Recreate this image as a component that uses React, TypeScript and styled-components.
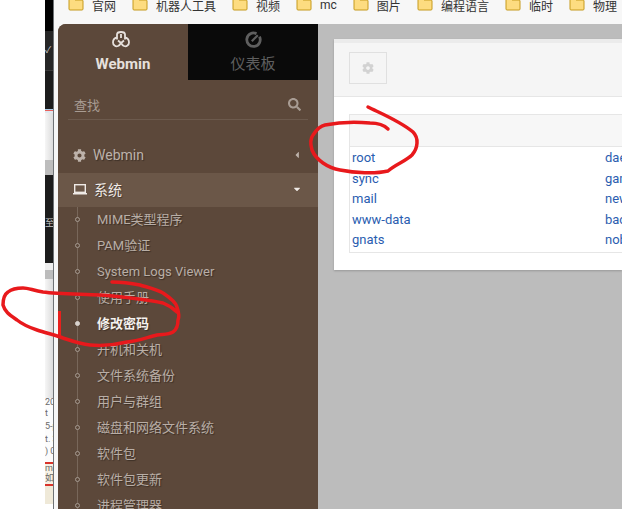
import React from "react";
import styled, { createGlobalStyle } from "styled-components";
import { FaCog, FaSearch, FaCaretLeft, FaCaretDown } from "react-icons/fa";

const bookmarks = ["官网", "机器人工具", "视频", "mc", "图片", "编程语言", "临时", "物理"];
const subItems = [
  "MIME类型程序",
  "PAM验证",
  "System Logs Viewer",
  "使用手册",
  "修改密码",
  "开机和关机",
  "文件系统备份",
  "用户与群组",
  "磁盘和网络文件系统",
  "软件包",
  "软件包更新",
  "进程管理器",
];
const users = [
  ["root", "daemon"],
  ["sync", "games"],
  ["mail", "news"],
  ["www-data", "backup"],
  ["gnats", "nobody"],
];
const paleFade = "linear-gradient(90deg, #f6f6f6, #dcdcdc)";
const slices: [number, string, string?][] = [
  [31, "#000"],
  [39, "#262626", "✓"],
  [1, "#3a3a3a"],
  [38, "#1c1c1c"],
  [1, "#a9cbe6"],
  [1, "#e8605c"],
  [2, "#dfe7ee"],
  [47, paleFade],
  [15, "#bdbdbd"],
  [40, "#1c1c1c"],
  [17, "#1c1c1c", "至"],
  [31, "#1c1c1c"],
  [7, "#efefef"],
  [9, "#bcbcbc"],
  [119, paleFade],
  [9, "#fcfcfc", "20"],
  [13, "#fcfcfc", "t"],
  [13, "#fcfcfc", "5-p"],
  [12, "#fcfcfc", "t. 3"],
  [12, "#fcfcfc", ") 0"],
  [5, "#fcfcfc"],
  [2, "#d9342b"],
  [9, "#f7f1e3", "me"],
  [11, "#f7f1e3", "如可"],
  [2, "#d9342b"],
  [18, "#efe9d8"],
];

const GlobalStyle = createGlobalStyle`
  html, body {
    margin: 0;
    padding: 0;
    background: #fff;
  }
`;

const Page = styled.div`
  position: relative;
  display: flex;
  width: 622px;
  height: 509px;
  overflow: hidden;
  font-family: Roboto, "Noto Sans CJK SC", sans-serif;
`;
const BlankSide = styled.div`
  flex: 0 0 45px;
`;
const BehindStrip = styled.div`
  flex: 0 0 8px;
  display: flex;
  flex-direction: column;
  overflow: hidden;
  border-right: 1px solid #6f7376;
`;
const Slice = styled.div<{ $h: number; $bg: string; $dark: boolean }>`
  flex: 0 0 ${(p) => p.$h}px;
  background: ${(p) => p.$bg};
  color: ${(p) => (p.$dark ? "#c9c9c9" : "#6a6a6a")};
  font-size: 9px;
  line-height: ${(p) => p.$h}px;
  white-space: nowrap;
  overflow: hidden;
`;
const BrowserWindow = styled.div`
  flex: 1;
  min-width: 0;
  display: flex;
  flex-direction: column;
`;
const BookmarkBar = styled.div`
  flex: 0 0 24px;
  display: flex;
  gap: 16px;
  padding-left: 14px;
  background: #f7f7f7;
  overflow: hidden;
`;
const Bookmark = styled.div`
  display: flex;
  flex: none;
  align-items: center;
  gap: 8px;
  height: 12px;
  margin-top: -1px;
  font-size: 12px;
  color: #333;
`;
const Desk = styled.div`
  flex: 1;
  min-height: 0;
  display: flex;
  background: #f7f7f7;
`;
const Sidebar = styled.aside`
  flex: 0 0 260px;
  margin-left: 4px;
  background: #5c483a;
  border-top-left-radius: 8px;
  overflow: hidden;
`;
const Tabs = styled.div`
  display: flex;
  height: 56px;
`;
const Tab = styled.div<{ $active?: boolean }>`
  flex: 1;
  display: flex;
  flex-direction: column;
  align-items: center;
  padding-top: 7px;
  gap: 8px;
  box-sizing: border-box;
  background: ${(p) => (p.$active ? "#5c483a" : "#0a0a0a")};
  color: ${(p) => (p.$active ? "#e6e0dc" : "#5f5f5f")};
  font-size: 15px;
  line-height: 16px;
  font-weight: ${(p) => (p.$active ? 700 : 400)};
`;
const SearchRow = styled.div`
  display: flex;
  justify-content: space-between;
  align-items: center;
  height: 40px;
  margin: 0 10px;
  padding: 10px 7px 0 6px;
  box-sizing: border-box;
  border-bottom: 1px solid #6c5a4d;
  color: #a89c93;
  font-size: 13px;
`;
const MenuGap = styled.div`
  height: 19px;
`;
const MenuRow = styled.div<{ $open?: boolean }>`
  display: flex;
  align-items: center;
  gap: 7px;
  height: 34px;
  box-sizing: border-box;
  padding: 0 16px 2px 15px;
  background: ${(p) => (p.$open ? "#6b5748" : "transparent")};
  color: ${(p) => (p.$open ? "#efeae6" : "#bdb2aa")};
  font-size: 14px;
  text-shadow: 1px 1px 1px rgba(0, 0, 0, 0.35);
`;
const MenuLabel = styled.span`
  flex: 1;
`;
const SubList = styled.div`
  position: relative;
  &::before {
    content: "";
    position: absolute;
    left: 19px;
    top: 0;
    bottom: 0;
    width: 1px;
    background: #78675a;
  }
`;
const SubItem = styled.div<{ $active?: boolean }>`
  position: relative;
  height: 26px;
  padding-left: ${(p) => (p.$active ? 36 : 39)}px;
  border-left: ${(p) => (p.$active ? "3px solid #e8201c" : "0")};
  color: ${(p) => (p.$active ? "#f4f1ee" : "#b9aea6")};
  font-size: 13px;
  font-weight: ${(p) => (p.$active ? 700 : 400)};
  line-height: 26px;
  white-space: nowrap;
  text-shadow: 1px 1px 1px rgba(0, 0, 0, 0.35);
  &::before {
    content: "";
    position: absolute;
    left: ${(p) => (p.$active ? 14 : 17)}px;
    top: 10px;
    width: 5px;
    height: 5px;
    box-sizing: border-box;
    border-radius: 50%;
    border: 1px solid ${(p) => (p.$active ? "#d8d2cd" : "#a59a91")};
    background: ${(p) => (p.$active ? "#d8d2cd" : "#5c483a")};
  }
`;
const Content = styled.main`
  flex: 1;
  min-width: 0;
  padding: 15px 0 0 16px;
  background: #bcbcbc;
`;
const Panel = styled.section`
  height: 231px;
  box-sizing: border-box;
  background: #fff;
  border-top: 4px solid #ebebeb;
  box-shadow: 0 1px 2px rgba(0, 0, 0, 0.2);
`;
const PanelHead = styled.div`
  height: 54px;
  box-sizing: border-box;
  padding: 9px 15px;
  background: #f5f5f5;
  border-bottom: 1px solid #e6e6e6;
`;
const GearButton = styled.div`
  display: flex;
  align-items: center;
  justify-content: center;
  width: 38px;
  height: 32px;
  box-sizing: border-box;
  border: 1px solid #e0e0e0;
  color: #d2d2d2;
`;
const PanelBody = styled.div`
  padding: 17px 0 0 15px;
`;
const UserTable = styled.div`
  border: 1px solid #e6e6e6;
  border-right: 0;
  height: 139px;
  box-sizing: border-box;
`;
const TableHead = styled.div`
  height: 31px;
  margin-bottom: 1px;
  background: #f7f7f7;
  border-bottom: 1px solid #e6e6e6;
`;
const UserRow = styled.div`
  display: grid;
  grid-template-columns: 253px 1fr;
  height: 20.6px;
  padding-left: 2px;
  color: #2a5db0;
  font-size: 13px;
  line-height: 20.6px;
  white-space: nowrap;
  overflow: hidden;
`;
const LogoWrap = styled.svg`
  margin-left: -5px;
`;
const Scribbles = styled.svg`
  position: absolute;
  left: 0;
  top: 0;
  pointer-events: none;
`;

const Folder = () => (
  <svg width="16" height="14" viewBox="0 0 16 14" style={{ marginTop: -2 }}>
    <path
      d="M1 -2V12a1 1 0 0 0 1 1H14a1 1 0 0 0 1-1V4a1 1 0 0 0-1-1H7L5-2Z"
      fill="#fddc80"
      stroke="#c69a1c"
    />
  </svg>
);

const WebminLogo = () => (
  <LogoWrap width="18" height="17" viewBox="0 0 18 17" fill="none" stroke="currentColor" strokeWidth="1.800">
    <path d="M5 8.500V3.500C5 1.800 6.500 1 9 1s4 .8 4 2.500V8.500" />
    <path d="M9 3v4" />
    <path d="M5 6.500C2.500 7 1 9 1 11.500c0 2.500 2.500 4.500 5 3.500 1.500-.6 2.300-1.800 3-3" />
    <path d="M13 6.500c2.500.5 4 2.500 4 5 0 2.500-2.500 4.500-5 3.500-1.500-.6-2.300-1.800-3-3" />
    <path d="M6 9.500 9 12l3-2.500" />
  </LogoWrap>
);

const Gauge = () => (
  <svg width="17" height="17" viewBox="0 0 17 17" fill="none" stroke="currentColor">
    <path d="M11.500 2.700A6.700 6.700 0 1 0 14.500 5.700" strokeWidth="2.800" />
    <path d="M6.800 10.200 12.800 4.200" strokeWidth="2.200" />
  </svg>
);

const LaptopIcon = () => (
  <svg width="14" height="11" viewBox="0 0 14 11" fill="none" stroke="currentColor" strokeWidth="1.400">
    <rect x="1.700" y="0.700" width="10.600" height="7.600" />
    <path d="M0 9.800H14" />
  </svg>
);

const App: React.FC = () => (
  <Page>
    <GlobalStyle />
    <BlankSide />
    <BehindStrip>
      {slices.map(([h, bg, text], i) => (
        <Slice key={i} $h={h} $bg={bg} $dark={bg === "#262626" || bg === "#1c1c1c"}>
          {text}
        </Slice>
      ))}
    </BehindStrip>
    <BrowserWindow>
      <BookmarkBar>
        {bookmarks.map((name) => (
          <Bookmark key={name}>
            <Folder />
            {name}
          </Bookmark>
        ))}
      </BookmarkBar>
      <Desk>
        <Sidebar>
          <Tabs>
            <Tab $active>
              <WebminLogo />
              Webmin
            </Tab>
            <Tab>
              <Gauge />
              仪表板
            </Tab>
          </Tabs>
          <SearchRow>
            查找
            <FaSearch size={13} />
          </SearchRow>
          <MenuGap />
          <MenuRow>
            <FaCog size={13} />
            <MenuLabel>Webmin</MenuLabel>
            <FaCaretLeft size={10} />
          </MenuRow>
          <MenuRow $open>
            <LaptopIcon />
            <MenuLabel>系统</MenuLabel>
            <FaCaretDown size={10} />
          </MenuRow>
          <SubList>
            {subItems.map((item) => (
              <SubItem key={item} $active={item === "修改密码"}>
                {item}
              </SubItem>
            ))}
          </SubList>
        </Sidebar>
        <Content>
          <Panel>
            <PanelHead>
              <GearButton>
                <FaCog size={12} />
              </GearButton>
            </PanelHead>
            <PanelBody>
              <UserTable>
                <TableHead />
                {users.map(([a, b]) => (
                  <UserRow key={a}>
                    <span>{a}</span>
                    <span>{b}</span>
                  </UserRow>
                ))}
              </UserTable>
            </PanelBody>
          </Panel>
        </Content>
      </Desk>
    </BrowserWindow>
    <Scribbles width="622" height="509" fill="none" stroke="#e8191c" strokeWidth="3.500" strokeLinecap="round" strokeLinejoin="round">
      <path d="M368 107C380 113 400 121 413 132C419 138 418 148 412 155C406 161 396 164 388 171C375 174 355 173 340 170C328 168 316 160 312 150C310 143 310 139 313 135C317 129 320 126 325 125C340 122 358 122 370 123C378 123 384 125 388 129" />
      <path d="M112 282C125 282 135 284 140 285C150 288 158 290 163 293C172 299 176 303 177 307C179 313 179 318 178 320C178 326 176 330 173 332C168 335 163 334 157 335C148 337 138 341 127 342C115 345 102 346 90 345C80 344 72 341 63 338C55 335 46 333 37 330C28 327 22 324 17 320C10 315 5 312 3 305C3 298 5 294 8 292C13 288 18 288 23 288C28 288 32 290 43 292C58 294 80 294 100 295C125 297 145 299 163 303C168 305 172 307 177 312" />
    </Scribbles>
  </Page>
);

export default App;
